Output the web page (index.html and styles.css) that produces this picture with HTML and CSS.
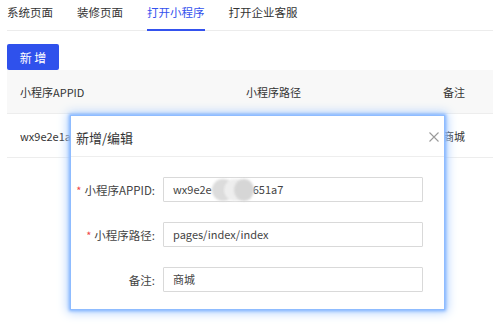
FILE: index.html
```html
<!DOCTYPE html>
<html>
<head>
<meta charset="utf-8">
<link rel="stylesheet" href="styles.css">
</head>
<body>
<div class="page">
  <div class="tabs">
    <div class="tab">系统页面</div>
    <div class="tab">装修页面</div>
    <div class="tab active">打开小程序</div>
    <div class="tab">打开企业客服</div>
  </div>
  <div class="toolbar">
    <button class="btn-primary">新 增</button>
  </div>
  <div class="table">
    <div class="thead">
      <div class="cell">小程序APPID</div>
      <div class="cell">小程序路径</div>
      <div class="cell">备注</div>
    </div>
    <div class="trow">
      <div class="cell"><span class="clip">wx9e2e1a2c8b0651a7</span></div>
      <div class="cell">pages/index/index</div>
      <div class="cell">商城</div>
    </div>
  </div>

  <div class="modal">
    <div class="modal-header">
      <span class="modal-title">新增/编辑</span>
      <svg class="close" width="10" height="10" viewBox="0 0 10 10"><path d="M0.5 0.5 L9.5 9.5 M9.5 0.5 L0.5 9.5" stroke="#9a9a9a" stroke-width="1.1" fill="none"/></svg>
    </div>
    <div class="modal-body">
      <div class="form-row">
        <label class="label"><span class="req">*</span>小程序APPID:</label>
        <div class="input">wx9e2e<span class="mask"><i class="blob b1"></i><i class="blob b2"></i><i class="blob b3"></i></span>651a7</div>
      </div>
      <div class="form-row">
        <label class="label"><span class="req">*</span>小程序路径:</label>
        <div class="input">pages/index/index</div>
      </div>
      <div class="form-row">
        <label class="label">备注:</label>
        <div class="input">商城</div>
      </div>
    </div>
  </div>
</div>
</body>
</html>
```
FILE: styles.css
```css
html, body {
  margin: 0;
  padding: 0;
  background: #ffffff;
}
body {
  font-family: "Noto Sans CJK SC", "Noto Sans", sans-serif;
  font-size: 11px;
  color: #333;
  width: 498px;
  height: 326px;
  overflow: hidden;
}
.page {
  position: relative;
  padding: 0 5px 0 7px;
}
.tabs {
  display: flex;
  gap: 24px;
  height: 30px;
  border-bottom: 1px solid #ececec;
}
.tab {
  font-size: 11.5px;
  line-height: 25px;
  color: #333;
  box-sizing: border-box;
  height: 31px;
}
.tab.active {
  color: #3452ee;
  border-bottom: 2px solid #3452ee;
}
.toolbar {
  padding-top: 13px;
}
.btn-primary {
  display: block;
  width: 52px;
  height: 26px;
  border: none;
  border-radius: 2px;
  background: #2f51ec;
  color: #fff;
  font-family: "Noto Sans CJK SC", sans-serif;
  font-size: 12px;
  padding: 0;
}
.thead, .trow {
  display: grid;
  grid-template-columns: 226px 197px 1fr;
  align-items: center;
}
.thead {
  background: #f8f8f8;
  height: 43px;
  border-bottom: 1px solid #ededed;
}
.trow {
  height: 43px;
  border-bottom: 1px solid #ededed;
}
.cell {
  padding-left: 13px;
  color: #333;
  white-space: nowrap;
  overflow: hidden;
}
.clip {
  display: block;
  width: 51px;
  overflow: hidden;
}
.modal {
  position: absolute;
  left: 71px;
  top: 116px;
  width: 373px;
  height: 193px;
  background: #fff;
  box-shadow: 0 0 0 1px #8fbcff, 0 0 3px 2px #7fb2ff, 0 0 10px 3px #aacdff;
}
.modal-header {
  display: flex;
  align-items: center;
  justify-content: space-between;
  height: 40px;
  padding: 2px 5px 0 5px;
  box-sizing: border-box;
  height: 41px;
  border-bottom: 1px solid #eeeeee;
}
.modal-title {
  font-size: 13px;
  color: #333;
}
.close {
  display: block;
}
.modal-body {
  display: flex;
  flex-direction: column;
  gap: 20px;
  padding-top: 20px;
}
.form-row {
  display: flex;
  align-items: center;
  gap: 6px;
}
.label {
  width: 84px;
  margin-right: 2px;
  text-align: right;
  font-size: 11.5px;
  color: #444;
  white-space: nowrap;
}
.req {
  color: #f04646;
  margin-right: 3px;
  font-size: 11px;
}
.input {
  position: relative;
  box-sizing: border-box;
  width: 260px;
  height: 25px;
  border: 1px solid #d9d9d9;
  border-radius: 1px;
  padding-left: 9px;
  line-height: 23px;
  font-size: 11px;
  color: #444;
  display: flex;
  align-items: center;
  white-space: nowrap;
}
.mask {
  position: relative;
  display: inline-block;
  width: 41px;
  height: 22px;
}
.blob {
  position: absolute;
  top: 0;
  width: 22px;
  height: 22px;
  border-radius: 50%;
  filter: blur(1px);
}
.b1 { left: 0; background: #dcdcdc; }
.b2 { left: 12px; background: #eeeeee; }
.b3 { left: 22px; background: #d6d6d6; width: 20px; }
```
